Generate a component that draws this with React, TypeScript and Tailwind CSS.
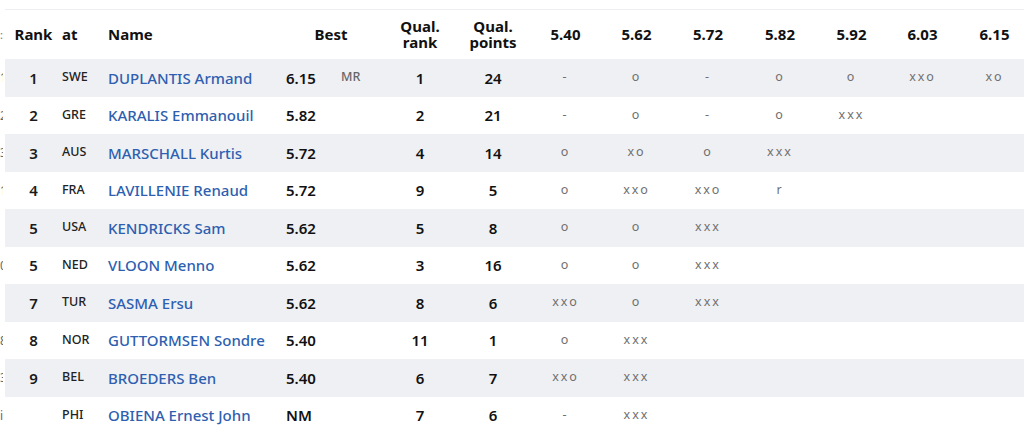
import React from "react";

type Row = {
  rank: string;
  nat: string;
  name: string;
  best: string;
  mark?: string;
  qr: string;
  qp: string;
  att: string[];
  edge: string;
};

const rows: Row[] = [
  { rank: "1", nat: "SWE", name: "DUPLANTIS Armand", best: "6.15", mark: "MR", qr: "1", qp: "24", att: ["-", "o", "-", "o", "o", "xxo", "xo"], edge: "1" },
  { rank: "2", nat: "GRE", name: "KARALIS Emmanouil", best: "5.82", qr: "2", qp: "21", att: ["-", "o", "-", "o", "xxx", "", ""], edge: "2" },
  { rank: "3", nat: "AUS", name: "MARSCHALL Kurtis", best: "5.72", qr: "4", qp: "14", att: ["o", "xo", "o", "xxx", "", "", ""], edge: "3" },
  { rank: "4", nat: "FRA", name: "LAVILLENIE Renaud", best: "5.72", qr: "9", qp: "5", att: ["o", "xxo", "xxo", "r", "", "", ""], edge: "1" },
  { rank: "5", nat: "USA", name: "KENDRICKS Sam", best: "5.62", qr: "5", qp: "8", att: ["o", "o", "xxx", "", "", "", ""], edge: "" },
  { rank: "5", nat: "NED", name: "VLOON Menno", best: "5.62", qr: "3", qp: "16", att: ["o", "o", "xxx", "", "", "", ""], edge: "0" },
  { rank: "7", nat: "TUR", name: "SASMA Ersu", best: "5.62", qr: "8", qp: "6", att: ["xxo", "o", "xxx", "", "", "", ""], edge: "" },
  { rank: "8", nat: "NOR", name: "GUTTORMSEN Sondre", best: "5.40", qr: "11", qp: "1", att: ["o", "xxx", "", "", "", "", ""], edge: "8" },
  { rank: "9", nat: "BEL", name: "BROEDERS Ben", best: "5.40", qr: "6", qp: "7", att: ["xxo", "xxx", "", "", "", "", ""], edge: "3" },
  { rank: "", nat: "PHI", name: "OBIENA Ernest John", best: "NM", qr: "7", qp: "6", att: ["-", "xxx", "", "", "", "", ""], edge: "i" },
];

const heights = ["5.40", "5.62", "5.72", "5.82", "5.92", "6.03", "6.15"];
const hW = ["w-[71px]", "w-[71px]", "w-[72px]", "w-[72px]", "w-[71px]", "w-[71px]", "w-[73px]"];

export default function App() {
  return (
    <div
      className="w-[1024px] h-[432px] overflow-hidden bg-white text-[#111]"
      style={{ fontFamily: '"Noto Sans", "Liberation Sans", sans-serif' }}
    >
      <div className="mt-[9px] ml-[5px] w-[1030px] border-t border-[#eceef2]">
        {/* header */}
        <div className="flex h-[49px] items-center pb-[1px] text-[15px] font-bold leading-[16px] text-[#111]">
          <div className="relative w-[52px] pl-[5px] text-center">
            <span className="absolute -left-[5px] top-[1px] w-[3px] overflow-hidden text-[11px] font-normal text-[#777]">:</span>
            Rank
          </div>
          <div className="w-[51px] pl-[5px]">at</div>
          <div className="w-[178px]">Name</div>
          <div className="w-[98px] pr-[8px] text-center">Best</div>
          <div className="w-[72px] text-center">
            Qual.
            <br />
            rank
          </div>
          <div className="w-[74px] text-center">
            Qual.
            <br />
            points
          </div>
          {heights.map((h, i) => (
            <div key={h} className={`${hW[i]} text-center`}>
              {h}
            </div>
          ))}
        </div>
        {/* rows */}
        {rows.map((r, idx) => (
          <div
            key={idx}
            className={`relative flex h-[37.5px] items-center ${idx % 2 === 0 ? "bg-[#eff0f4]" : "bg-white"}`}
          >
            <span className="absolute -left-[5px] top-[12px] w-[3px] overflow-hidden text-[12px] leading-[14px] text-[#666]">
              {r.edge}
            </span>
            <div className="w-[52px] pl-[5px] text-center text-[15px] font-semibold text-[#1a1a1a]">{r.rank}</div>
            <div className="w-[51px] pl-[5px] text-[12.5px] font-medium text-[#222]">{r.nat}</div>
            <div className="w-[178px] text-[15px] font-medium text-[#2e5fb0] whitespace-nowrap">{r.name}</div>
            <div className="w-[98px] flex items-center">
              <span className="w-[55px] text-[15px] font-semibold text-[#111]">{r.best}</span>
              {r.mark && <span className="text-[12.5px] font-medium text-[#666]">{r.mark}</span>}
            </div>
            <div className="w-[72px] text-center text-[15px] font-semibold text-[#111]">{r.qr}</div>
            <div className="w-[74px] text-center text-[15px] font-semibold text-[#111]">{r.qp}</div>
            {r.att.map((a, i) => (
              <div key={i} className={`${hW[i]} text-center text-[12.5px] tracking-[2px] text-[#6f6f6f]`}>
                {a}
              </div>
            ))}
          </div>
        ))}
      </div>
    </div>
  );
}
